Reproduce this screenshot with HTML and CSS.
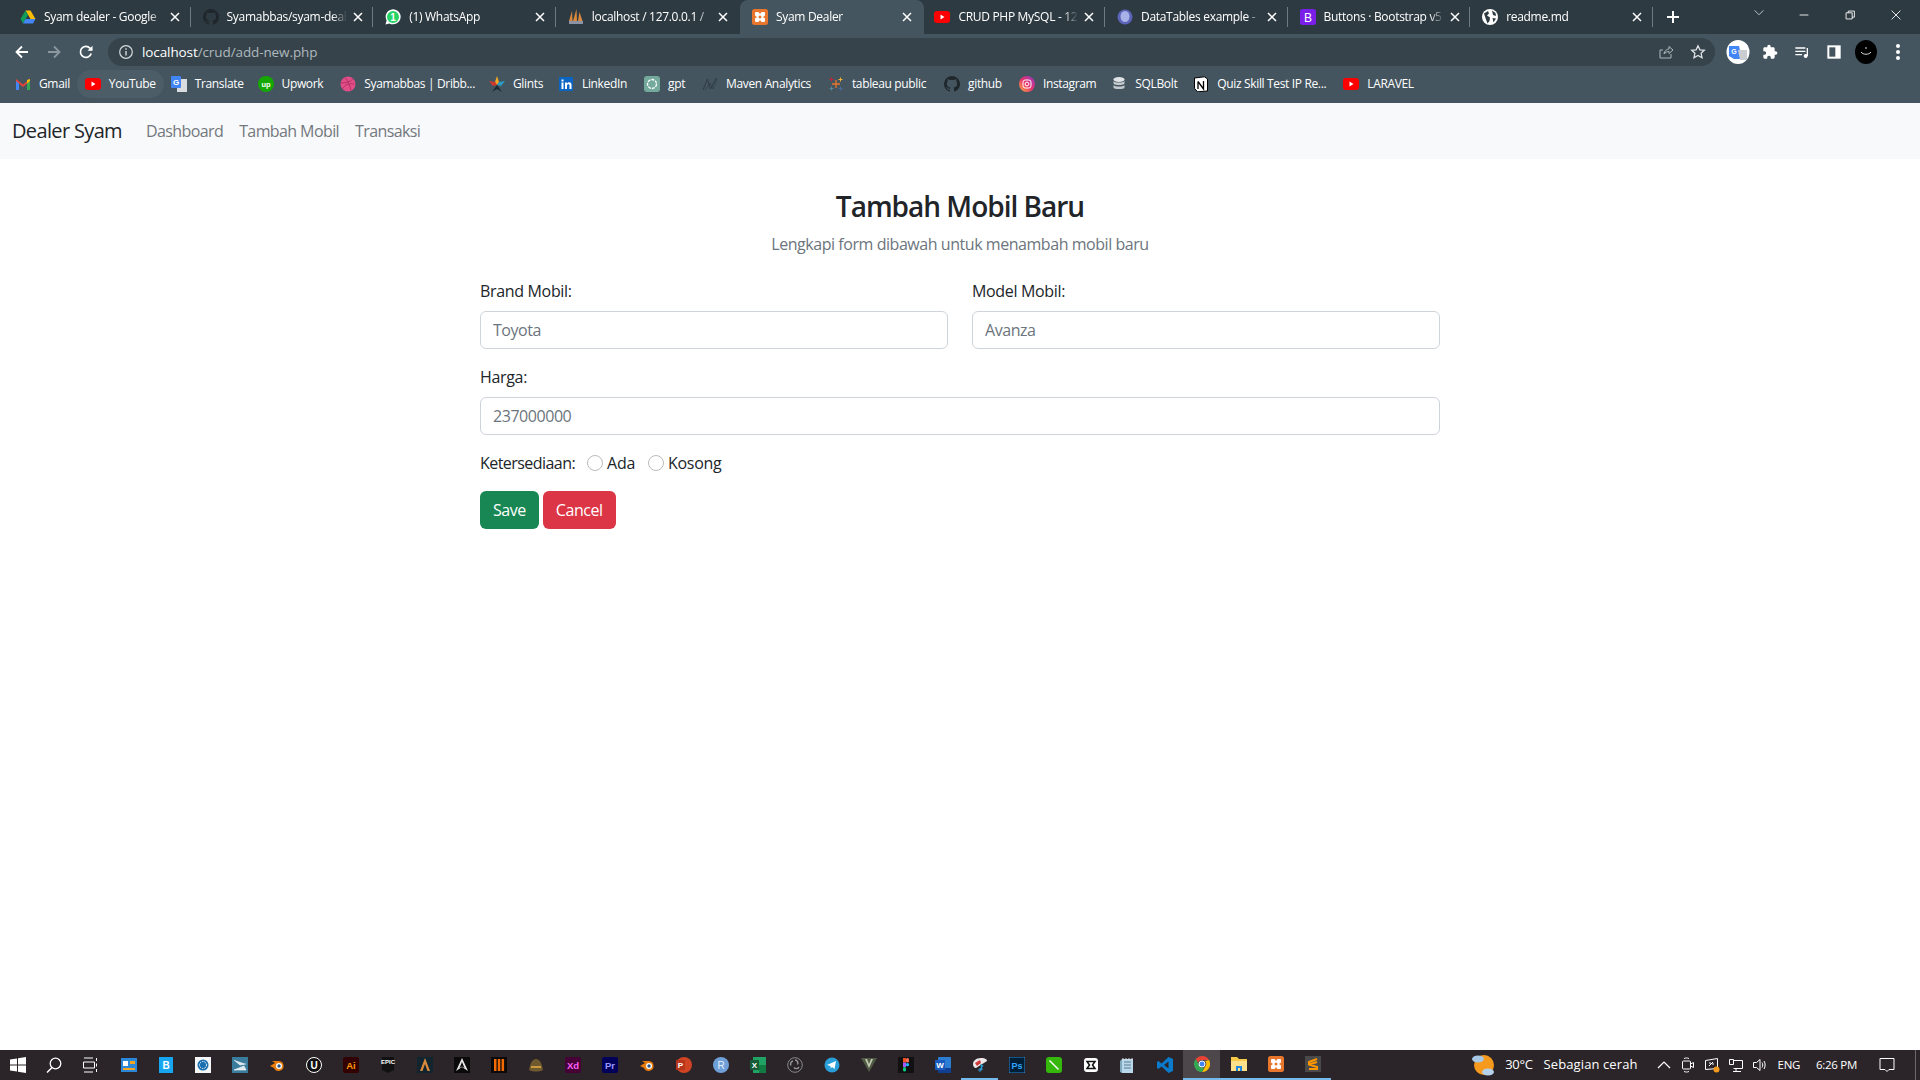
FILE: index.html
```html
<!DOCTYPE html>
<html lang="en">
<head>
    <meta charset="utf-8">
    <title>Syam Dealer</title>
    <link rel="stylesheet" href="styles.css">
</head>
<body>
    <svg class="defs" width="0" height="0">
        <symbol id="yt" viewBox="0 0 16 16"><rect x="0" y="2" width="16" height="12" rx="3" fill="#f00"/><path d="M6.5 5.5v5l4-2.5z" fill="#fff"/></symbol>
        <symbol id="gh" viewBox="0 0 16 16"><path d="M8 0a8 8 0 0 0-2.5 15.6c.4.1.5-.2.5-.4v-1.4c-2.2.5-2.7-1-2.7-1-.4-.9-.9-1.200-.9-1.200-.7-.5.1-.5.1-.5.8.1 1.200.8 1.200.8.7 1.200 1.900.9 2.300.7.1-.5.3-.9.5-1.100-1.800-.2-3.600-.9-3.600-4 0-.9.3-1.600.8-2.100-.1-.2-.4-1 .1-2.100 0 0 .7-.2 2.200.8a7.600 7.600 0 0 1 4 0c1.500-1 2.200-.8 2.200-.8.4 1.100.2 1.900.1 2.100.5.6.8 1.300.8 2.100 0 3.100-1.900 3.800-3.700 4 .3.300.6.800.6 1.500v2.200c0 .2.100.5.500.4A8 8 0 0 0 8 0z"/></symbol>
        <symbol id="xampp" viewBox="0 0 16 16"><rect width="16" height="16" rx="2.5" fill="#e8762d"/><path d="M4 3h2.500L8 5l1.500-2H12a1 1 0 0 1 1 1v2.500L11 8l2 1.500V12a1 1 0 0 1-1 1H9.500L8 11l-1.500 2H4a1 1 0 0 1-1-1V9.500L5 8 3 6.500V4a1 1 0 0 1 1-1z" fill="#fff"/><circle cx="8" cy="8" r="1.5" fill="#e8762d"/></symbol>
        <symbol id="close" viewBox="0 0 16 16"><path d="M4 4l8 8M12 4l-8 8" stroke="#fff" stroke-width="1.5" fill="none"/></symbol>
    </svg>

    <div class="browser">
        <div class="tabstrip">
            <div class="tab">
                <svg class="fav" viewBox="0 0 16 16"><path d="M5.500 1.500h5l5 8.500h-5z" fill="#fbbc04"/><path d="M5.500 1.500L.5 10l2.500 4.500L8 6z" fill="#0f9d58"/><path d="M3 14.500h10l2.500-4.500H5.500z" fill="#4285f4"/></svg>
                <span class="tab-title">Syam dealer - Google</span>
                <svg class="tab-x"><use href="#close"/></svg>
            </div>
            <i class="tab-sep"></i>
            <div class="tab">
                <svg class="fav dim-gh"><use href="#gh"/></svg>
                <span class="tab-title">Syamabbas/syam-deal</span>
                <svg class="tab-x"><use href="#close"/></svg>
            </div>
            <i class="tab-sep"></i>
            <div class="tab">
                <svg class="fav" viewBox="0 0 16 16"><path d="M.5 15.500l1.100-4A7.500 7.500 0 1 1 4.500 14.400z" fill="#fff"/><circle cx="8" cy="8" r="6" fill="#25d366"/><text x="8" y="11.500" class="fav-text" fill="#fff" font-size="10">1</text></svg>
                <span class="tab-title">(1) WhatsApp</span>
                <svg class="tab-x"><use href="#close"/></svg>
            </div>
            <i class="tab-sep"></i>
            <div class="tab">
                <svg class="fav" viewBox="0 0 16 16"><path d="M4 2L1 12h3.500zM8.500 0L5 12h4zM11.500 3L10 12h4.500z" fill="#d98a3c"/><rect x="1" y="12" width="14" height="3" fill="#8b93a5"/></svg>
                <span class="tab-title">localhost / 127.0.0.1 /</span>
                <svg class="tab-x"><use href="#close"/></svg>
            </div>
            <div class="tab tab-active">
                <svg class="fav"><use href="#xampp"/></svg>
                <span class="tab-title">Syam Dealer</span>
                <svg class="tab-x"><use href="#close"/></svg>
            </div>
            <div class="tab">
                <svg class="fav"><use href="#yt"/></svg>
                <span class="tab-title">CRUD PHP MySQL - 12</span>
                <svg class="tab-x"><use href="#close"/></svg>
            </div>
            <i class="tab-sep"></i>
            <div class="tab">
                <svg class="fav" viewBox="0 0 16 16"><circle cx="8" cy="8" r="7.5" fill="#5b64b8"/><ellipse cx="8" cy="7.5" rx="4.5" ry="5.5" fill="#a9b2e6"/></svg>
                <span class="tab-title">DataTables example -</span>
                <svg class="tab-x"><use href="#close"/></svg>
            </div>
            <i class="tab-sep"></i>
            <div class="tab">
                <svg class="fav" viewBox="0 0 16 16"><rect width="16" height="16" rx="2.5" fill="#7a1fe8"/><text x="8" y="12.500" class="fav-text fav-thin" fill="#fff" font-size="12">B</text></svg>
                <span class="tab-title">Buttons · Bootstrap v5</span>
                <svg class="tab-x"><use href="#close"/></svg>
            </div>
            <i class="tab-sep"></i>
            <div class="tab">
                <svg class="fav" viewBox="0 0 16 16"><circle cx="8" cy="8" r="8" fill="#fff"/><path d="M2 4.500l4-2.500 1 2.500-2 2 3 2-.5 3.500-2 2.500L3.500 9zM10 1.500l3.500 2.500.5 3-3-1zM10.500 9l3.500.5-2.500 4z" fill="#2e3a41"/></svg>
                <span class="tab-title">readme.md</span>
                <svg class="tab-x"><use href="#close"/></svg>
            </div>
            <i class="tab-sep"></i>
            <svg class="newtab" viewBox="0 0 16 16"><path d="M8 2v12M2 8h12" stroke="#fff" stroke-width="2"/></svg>
            <svg class="tab-list" viewBox="0 0 16 16"><path d="M3 5l5 5 5-5" stroke="#cfd6da" fill="none"/></svg>
            <div class="winbtns">
                <svg viewBox="0 0 16 16"><path d="M3 8h10" stroke="#fff"/></svg>
                <svg viewBox="0 0 16 16"><path d="M3.500 5.500h7v7h-7zM6 5.500V3.500h7v7h-2.500" stroke="#fff" fill="none"/></svg>
                <svg viewBox="0 0 16 16"><path d="M3 3l10 10M13 3L3 13" stroke="#fff" fill="none"/></svg>
            </div>
        </div>

        <div class="toolbar">
            <svg class="nav-ico" viewBox="0 0 16 16"><path d="M14 8H3M8 2.500L2.500 8 8 13.500" stroke="#fff" stroke-width="1.8" fill="none"/></svg>
            <svg class="nav-ico" viewBox="0 0 16 16"><path d="M2 8h11M8 2.500L13.500 8 8 13.500" stroke="#8b989f" stroke-width="1.8" fill="none"/></svg>
            <svg class="nav-ico" viewBox="0 0 16 16"><path d="M13.200 9.500A5.500 5.500 0 1 1 12 4.200L14 6" stroke="#fff" stroke-width="1.7" fill="none"/><path d="M14.500 1.800v5h-5z" fill="#fff"/></svg>
            <div class="omnibox">
                <svg class="info" viewBox="0 0 16 16"><circle cx="8" cy="8" r="6.3" stroke="#d5dbde" stroke-width="1.2" fill="none"/><path d="M8 7v4.500M8 4.300v1.400" stroke="#d5dbde" stroke-width="1.4"/></svg>
                <span class="url"><b>localhost</b>/crud/add-new.php</span>
                <svg class="omni-ico" viewBox="0 0 16 16"><path d="M13 10v4H2V6h3M6 10c0-3 3-5 5-5V2.500L15 6l-4 3.500V7.500c-2 0-4 1-5 2.500z" stroke="#aeb8bd" fill="none"/></svg>
                <svg class="omni-ico" viewBox="0 0 16 16"><path d="M8 1.800l1.900 4 4.400.5-3.200 3 .9 4.400L8 11.500l-4 2.200.9-4.400-3.200-3 4.400-.5z" stroke="#dfe4e7" stroke-width="1.3" fill="none"/></svg>
            </div>
            <div class="ext-row">
                <svg class="ext" viewBox="0 0 24 24"><ellipse cx="12" cy="12" rx="11.5" ry="12" fill="#fff"/><path d="M3 6h10l3 13H8l-5-3z" fill="#4285f4"/><path d="M12 10h9v10h-7z" fill="#c9ccd1"/><text x="8" y="14" class="fav-text" fill="#fff" font-size="7">G</text></svg>
                <svg class="ext" viewBox="0 0 24 24"><path d="M20.500 11H19V7c0-1.100-.9-2-2-2h-4V3.500C13 2.120 11.880 1 10.500 1S8 2.120 8 3.500V5H4c-1.100 0-2 .9-2 2v3.800h1.500c1.490 0 2.700 1.210 2.700 2.700s-1.210 2.700-2.700 2.700H2V20c0 1.100.9 2 2 2h3.800v-1.500c0-1.490 1.210-2.700 2.700-2.700s2.700 1.210 2.700 2.700V22H17c1.100 0 2-.9 2-2v-4h1.500c1.380 0 2.500-1.120 2.500-2.500S21.880 11 20.500 11z" fill="#fff"/></svg>
                <svg class="ext" viewBox="0 0 24 24"><path d="M2 6h15M2 11h15M2 16h10" stroke="#fff" stroke-width="2"/><path d="M20 6v12" stroke="#fff" stroke-width="2"/><circle cx="17.500" cy="18" r="3" fill="#fff"/></svg>
                <svg class="ext" viewBox="0 0 24 24"><path d="M2 2h20v20H2z" fill="#fff"/><rect x="5" y="5" width="9" height="14" fill="#44555f"/></svg>
                <svg class="ext" viewBox="0 0 24 24"><ellipse cx="12" cy="12" rx="11" ry="12" fill="#000"/><path d="M7 12c2 3 8 3 10 0" stroke="#ddd" fill="none"/><path d="M11 8h2" stroke="#ddd"/></svg>
                <svg class="ext" viewBox="0 0 24 24"><circle cx="12" cy="6" r="2" fill="#fff"/><circle cx="12" cy="12" r="2" fill="#fff"/><circle cx="12" cy="18" r="2" fill="#fff"/></svg>
            </div>
        </div>

        <div class="bookmarks">
            <div class="bm bm-gmail">
                <svg viewBox="0 0 16 16"><path d="M1 3l7 5.500L15 3v11h-3V7.500L8 11 4 7.500V14H1z" fill="#ea4335"/><path d="M1 5v9h3V7.500z" fill="#4285f4"/><path d="M15 5v9h-3V7.500z" fill="#34a853"/><path d="M12 4l3-1v2l-3 2.500z" fill="#fbbc04"/></svg>Gmail</div>
            <div class="bm bm-yt"><svg><use href="#yt"/></svg>YouTube</div>
            <div class="bm bm-translate">
                <svg viewBox="0 0 16 16"><rect x="6" y="3" width="10" height="13" fill="#d9dde0"/><rect y="0" width="10" height="12" rx="1" fill="#4285f4"/><text x="5" y="9" class="fav-text" fill="#fff" font-size="8">G</text></svg>Translate</div>
            <div class="bm bm-upwork">
                <svg viewBox="0 0 16 16"><circle cx="8" cy="8" r="8" fill="#14a800"/><text x="8" y="10.500" class="fav-text" fill="#fff" font-size="7.5">up</text></svg>Upwork</div>
            <div class="bm bm-dribbble">
                <svg viewBox="0 0 16 16"><circle cx="8" cy="8" r="7.5" fill="#e24d87"/><path d="M5 1.500c3 4 5 8 6 13M1 7c5 0 9-1 12-4M2.500 13c2-4 6-6 12-5" stroke="#a82c5c" stroke-width=".8" fill="none"/></svg>Syamabbas | Dribb...</div>
            <div class="bm bm-glints">
                <svg viewBox="0 0 16 16"><path d="M8 0l2 6-2 3-2-3z" fill="#f6a623"/><path d="M16 5l-6 1-2 3 4 1z" fill="#2a9dc4"/><path d="M0 5l6 1 2 3-4 1z" fill="#d0392e"/><path d="M8 9l5 7-5-3-5 3z" fill="#1d2a32"/></svg>Glints</div>
            <div class="bm bm-linkedin">
                <svg viewBox="0 0 16 16"><rect x="1" y="1" width="14" height="14" fill="#0a66c2"/><path d="M3.500 6.500h2V13h-2zM3.500 3.500h2v2h-2zM7 6.500h2v1c.5-.8 1.300-1.200 2.200-1.200 1.500 0 2.300 1 2.300 2.700v4h-2V9.500c0-.8-.3-1.300-1-1.300S9 8.700 9 9.500V13H7z" fill="#fff"/></svg>LinkedIn</div>
            <div class="bm bm-gpt">
                <svg viewBox="0 0 16 16"><rect width="16" height="16" rx="3" fill="#74aa9c"/><circle cx="8" cy="8" r="4.5" stroke="#fff" stroke-width="1.3" fill="none" stroke-dasharray="3 1"/></svg>gpt</div>
            <div class="bm bm-maven">
                <svg viewBox="0 0 16 16"><path d="M1 14L5.500 3l3 10L14.500 2" stroke="#2e3a41" fill="none"/><path d="M3 14l5-7 3 6 4-10" stroke="#2e3a41" stroke-width=".6" fill="none"/></svg>Maven Analytics</div>
            <div class="bm bm-tableau">
                <svg viewBox="0 0 16 16"><path d="M8 4v8M4 8h8" stroke="#e8762d" stroke-width="1.3"/><path d="M3.500 1.500v4M1.500 3.500h4" stroke="#c72037"/><path d="M12.500 1.500v4M10.500 3.500h4" stroke="#f2b134"/><path d="M3.500 10.500v4M1.500 12.500h4" stroke="#5b879b"/><path d="M12.500 10.500v4M10.500 12.500h4" stroke="#4e6a9e"/></svg>tableau public</div>
            <div class="bm bm-github"><svg><use href="#gh"/></svg>github</div>
            <div class="bm bm-ig">
                <svg viewBox="0 0 16 16"><defs><linearGradient id="ig" x1="0" y1="1" x2="1" y2="0"><stop offset="0" stop-color="#fbb03b"/><stop offset=".5" stop-color="#e8316f"/><stop offset="1" stop-color="#8a3ac8"/></linearGradient></defs><circle cx="8" cy="8" r="8" fill="url(#ig)"/><rect x="4" y="4" width="8" height="8" rx="2.2" stroke="#fff" fill="none"/><circle cx="8" cy="8" r="1.9" stroke="#fff" fill="none"/></svg>Instagram</div>
            <div class="bm bm-sql">
                <svg viewBox="0 0 16 16"><ellipse cx="8" cy="3.500" rx="5.500" ry="2.500" fill="#e0e4e6"/><path d="M2.500 5v2.500c1.500 2 9.500 2 11 0V5c-1.500 2-9.500 2-11 0zM2.500 9v2.500c0 2 11 2 11 0V9c-1.500 2-9.500 2-11 0z" fill="#c4cacd"/></svg>SQLBolt</div>
            <div class="bm bm-quiz">
                <svg viewBox="0 0 16 16"><path d="M1.500 2l10-1.200L14.500 3v12l-10 .8-3-3.500z" fill="#fff" stroke="#000"/><path d="M5 5.500v7.500M5 5.500l5.500 7.500V5" stroke="#000" stroke-width="1.3" fill="none"/></svg>Quiz Skill Test IP Re...</div>
            <div class="bm bm-laravel"><svg><use href="#yt"/></svg>LARAVEL</div>
        </div>
    </div>

    <nav class="navbar">
        <a class="brand">Dealer Syam</a>
        <a class="nav-link">Dashboard</a>
        <a class="nav-link">Tambah Mobil</a>
        <a class="nav-link">Transaksi</a>
    </nav>

    <main class="page">
        <h3 class="page-title">Tambah Mobil Baru</h3>
        <p class="page-sub">Lengkapi form dibawah untuk menambah mobil baru</p>

        <form class="form">
            <div class="row">
                <div class="col">
                    <label class="form-label">Brand Mobil:</label>
                    <input class="form-control" type="text" placeholder="Toyota">
                </div>
                <div class="col">
                    <label class="form-label">Model Mobil:</label>
                    <input class="form-control" type="text" placeholder="Avanza">
                </div>
            </div>
            <div class="field">
                <label class="form-label">Harga:</label>
                <input class="form-control" type="text" placeholder="237000000">
            </div>
            <div class="radios">
                <span class="radios-label">Ketersediaan:</span>
                <label class="radio"><i class="radio-dot"></i>Ada</label>
                <label class="radio"><i class="radio-dot"></i>Kosong</label>
            </div>
            <div class="actions">
                <button class="btn btn-save" type="button">Save</button>
                <button class="btn btn-cancel" type="button">Cancel</button>
            </div>
        </form>
    </main>

    <footer class="taskbar">
        <svg class="sys" viewBox="0 0 16 16"><path d="M0 2.500l7-1v6H0zM8 1.300L16 0v7.500H8zM0 8.500h7v6l-7-1zM8 8.500h8V16l-8-1.200z" fill="#fff"/></svg>
        <svg class="sys" viewBox="0 0 16 16"><circle cx="9.500" cy="6.500" r="5.300" stroke="#fff" stroke-width="1.3" fill="none"/><path d="M6 10.500L1 15.500" stroke="#fff" stroke-width="1.5"/></svg>
        <svg class="sys" viewBox="0 0 16 16"><path d="M2 1h9M2 15h9M1.500 5h11v6h-11zM14.500 1v3M14.500 6.500v3M14.500 12v3" stroke="#fff" fill="none"/></svg>

        <div class="apps">
            <div class="app"><svg viewBox="0 0 16 16"><rect y="1" width="16" height="14" fill="#2b88d8"/><rect x="2" y="4" width="5" height="5" fill="#fff"/><rect x="9" y="4" width="5" height="3" fill="#f6a623"/><rect x="2" y="11" width="12" height="2" fill="#f6a623"/></svg></div>
            <div class="app"><svg viewBox="0 0 16 16"><rect x="1" width="14" height="16" fill="#16a6f0"/><text x="8" y="12" class="fav-text" fill="#fff" font-size="10">B</text></svg></div>
            <div class="app"><svg viewBox="0 0 16 16"><rect width="16" height="16" fill="#f4f6f8"/><circle cx="8" cy="8" r="5.500" fill="#1a6fb0"/><circle cx="8" cy="8" r="3.500" stroke="#fff" fill="none" stroke-dasharray="1.5 1"/></svg></div>
            <div class="app"><svg viewBox="0 0 16 16"><rect width="16" height="16" fill="#3a7c9c"/><path d="M2 3l6 5 6-1M2 13l10-4 2 4z" stroke="#fff" fill="#dfe8ec" stroke-width=".6"/></svg></div>
            <div class="app"><svg viewBox="0 0 16 16"><path d="M1 9l5-3-3-2h7a5 5 0 1 1-5 7z" fill="#e87d0d"/><circle cx="10" cy="9" r="3" fill="#fff"/><circle cx="10" cy="9" r="1.7" fill="#265787"/></svg></div>
            <div class="app"><svg viewBox="0 0 16 16"><circle cx="8" cy="8" r="7.500" stroke="#fff" fill="#111"/><text x="8" y="12" class="fav-text" fill="#fff" font-size="10">U</text></svg></div>
            <div class="app"><svg viewBox="0 0 16 16"><rect width="16" height="16" rx="2" fill="#330000"/><text x="8" y="12" class="fav-text" fill="#ff9a00" font-size="9.5">Ai</text></svg></div>
            <div class="app"><svg viewBox="0 0 16 16"><path d="M2 0h12v13l-6 3-6-3z" fill="#111"/><text x="8" y="7" class="fav-text" fill="#fff" font-size="6">EPIC</text></svg></div>
            <div class="app"><svg viewBox="0 0 16 16"><rect width="16" height="16" fill="#12242e"/><path d="M8 1L3 14h2.500L8 7l2.500 7H13z" fill="#d98a3c"/></svg></div>
            <div class="app"><svg viewBox="0 0 16 16"><rect width="16" height="16" fill="#0a0a0a"/><path d="M8 1L2 14l6-4 6 4zM8 5l-2.500 6L8 9.500l2.500 1.500z" fill="#e8e8e8" fill-rule="evenodd"/></svg></div>
            <div class="app"><svg viewBox="0 0 16 16"><rect width="16" height="16" fill="#0a0a0a"/><path d="M3 2h2.500v12H3zM6.800 2h2.500v12H6.800zM10.600 2h2.500v12h-2.500z" fill="#f26a00"/></svg></div>
            <div class="app"><svg viewBox="0 0 16 16"><path d="M1 13c1-6 3-11 7-11s6 5 7 11c-4 2-10 2-14 0z" fill="#6e5a2e"/><path d="M3 9h10v2H3z" fill="#c99a3e"/></svg></div>
            <div class="app"><svg viewBox="0 0 16 16"><rect width="16" height="16" rx="2" fill="#470137"/><text x="8" y="12" class="fav-text" fill="#ff61f6" font-size="9.5">Xd</text></svg></div>
            <div class="app"><svg viewBox="0 0 16 16"><rect width="16" height="16" rx="2" fill="#00005b"/><text x="8" y="12" class="fav-text" fill="#9999ff" font-size="9.5">Pr</text></svg></div>
            <div class="app"><svg viewBox="0 0 16 16"><path d="M1 9l5-3-3-2h7a5 5 0 1 1-5 7z" fill="#e87d0d"/><circle cx="10" cy="9" r="3" fill="#fff"/><circle cx="10" cy="9" r="1.7" fill="#265787"/></svg></div>
            <div class="app"><svg viewBox="0 0 16 16"><circle cx="8" cy="8" r="8" fill="#d04423"/><rect y="3" width="9" height="10" rx="1" fill="#b7361b"/><text x="4.500" y="11" class="fav-text" fill="#fff" font-size="8">P</text></svg></div>
            <div class="app"><svg viewBox="0 0 16 16"><circle cx="8" cy="8" r="8" fill="#6f9fd8"/><text x="8" y="12" class="fav-text fav-thin" fill="#e8f0f8" font-size="10">R</text></svg></div>
            <div class="app"><svg viewBox="0 0 16 16"><rect x="3" width="13" height="16" fill="#21a366"/><rect x="9" y="8" width="7" height="8" fill="#107c41"/><rect y="3" width="9" height="10" fill="#185c37"/><text x="4.500" y="11" class="fav-text" fill="#fff" font-size="8">X</text></svg></div>
            <div class="app"><svg viewBox="0 0 16 16"><circle cx="8" cy="8" r="7.300" stroke="#8a8a8a" fill="#2a2528"/><path d="M8 3a3 3 0 0 1 2.500 4.500M12 10a3 3 0 0 1-5 .5M4 8.500A3 3 0 0 1 6 4" stroke="#9a9a9a" stroke-width="1.4" fill="none"/></svg></div>
            <div class="app"><svg viewBox="0 0 16 16"><circle cx="8" cy="8" r="7.500" fill="#2a9ed8"/><path d="M3 8l9-4-1.500 8-2.500-2-1.200 1.500-.5-2.500z" fill="#fff"/></svg></div>
            <div class="app"><svg viewBox="0 0 16 16"><path d="M0 1h16L8 15z" fill="#4f5a45"/><path d="M4 2l4 9 4-9-2 0-2 5-2-5z" fill="#c5c9b0"/></svg></div>
            <div class="app"><svg viewBox="0 0 16 16"><rect width="16" height="16" fill="#111"/><rect x="5" y="1" width="3" height="4.500" fill="#f24e1e"/><rect x="8" y="1" width="3" height="4.500" rx="1.5" fill="#ff7262"/><rect x="5" y="5.500" width="3" height="4.500" fill="#a259ff"/><circle cx="9.500" cy="7.700" r="1.6" fill="#1abcfe"/><rect x="5" y="10" width="3" height="4.500" rx="1.5" fill="#0acf83"/></svg></div>
            <div class="app"><svg viewBox="0 0 16 16"><rect x="3" width="13" height="16" rx="1" fill="#2b7cd3"/><rect x="3" y="11" width="13" height="5" fill="#103f91"/><rect y="3" width="10" height="10" fill="#185abd"/><text x="5" y="11" class="fav-text" fill="#fff" font-size="8">W</text></svg></div>
            <div class="app app-open"><svg viewBox="0 0 16 16"><path d="M1 8c0-3 3-6 8-6s6 2 6 3L4 12c-2 0-3-2-3-4z" fill="#f0e8e8"/><path d="M3 7l5-3 1 3-4 3z" fill="#d03a3a"/><path d="M9 8l1 6M11 9l-3 5" stroke="#2a9ed8" stroke-width="1.2"/><circle cx="8" cy="14" r="1.2" stroke="#2a9ed8" fill="none"/></svg></div>
            <div class="app"><svg viewBox="0 0 16 16"><rect width="16" height="16" rx="1.5" fill="#001e36" stroke="#31a8ff" stroke-width=".8"/><text x="8" y="12" class="fav-text" fill="#31a8ff" font-size="9">Ps</text></svg></div>
            <div class="app"><svg viewBox="0 0 16 16"><rect width="16" height="16" rx="3" fill="#35b80b"/><path d="M4 3l9 9-1 1-9-9z" fill="#fff"/></svg></div>
            <div class="app"><svg viewBox="0 0 16 16"><rect x="1" y="1" width="14" height="14" rx="3" fill="#fff"/><path d="M4 4.500h8L9.500 8 12 11.500H4L6.500 8z" fill="none" stroke="#111" stroke-width="1.5"/></svg></div>
            <div class="app"><svg viewBox="0 0 16 16"><path d="M2 2h11v14H2z" fill="#b9d7ea"/><path d="M0 4l2-2v14l-2-1z" fill="#7fa8bd"/><path d="M4 5h7M4 8h7M4 11h7" stroke="#5b7d90"/><path d="M3 1v2M6 1v2M9 1v2M12 1v2" stroke="#ddd"/></svg></div>
            <div class="app"><svg viewBox="0 0 16 16"><path d="M11.500 0L16 2v12l-4.500 2L4.500 9.500 1.500 12 0 11V5l1.500-1 3 2.500zM11.500 4.500L7 8l4.500 3.500z" fill="#0a7acb" fill-rule="evenodd"/></svg></div>
            <div class="app app-active">
                <svg viewBox="0 0 16 16"><path d="M8 0a8 8 0 0 1 7 4H8a4 4 0 0 0-4 3L1.800 3A8 8 0 0 1 8 0z" fill="#ea4335"/><path d="M15 4a8 8 0 0 1-7 12l3.500-6A4 4 0 0 0 11 5z" fill="#fbbc04"/><path d="M1.800 3L5 9a4 4 0 0 0 5 2.500L8 16A8 8 0 0 1 1.800 3z" fill="#34a853"/><circle cx="8" cy="8" r="3" fill="#4285f4" stroke="#fff"/></svg>
            </div>
            <div class="app app-open"><svg viewBox="0 0 16 16"><path d="M0 1h6l2 2h8v12H0z" fill="#f7c948"/><path d="M0 5h16v10H0z" fill="#ffe08a"/><path d="M5 15v-5h6v5H9v-3H7v3z" fill="#1e88e5"/></svg></div>
            <div class="app app-open"><svg><use href="#xampp"/></svg></div>
            <div class="app app-open"><svg viewBox="0 0 16 16"><rect width="16" height="16" fill="#4a4a4a"/><path d="M12 3L4 6v2.500l8 2.500v2l-8 0M4 8.500L12 6" stroke="#ff9800" stroke-width="2" fill="none"/></svg></div>
        </div>

        <div class="tray">
            <svg class="weather" viewBox="0 0 24 24"><circle cx="13" cy="12" r="10" fill="#f59a1c"/><ellipse cx="7" cy="6" rx="6" ry="3.5" fill="#a8c8e8"/><ellipse cx="17" cy="19" rx="6" ry="3.5" fill="#b6d1ec"/></svg>
            <span class="temp">30°C</span>
            <span class="cond">Sebagian cerah</span>
            <svg class="tray-ico caret" viewBox="0 0 16 16"><path d="M2 11l6-6 6 6" stroke="#fff" stroke-width="1.2" fill="none"/></svg>
            <svg class="tray-ico" viewBox="0 0 16 16"><rect x="2.500" y="4" width="8" height="8" rx="1" stroke="#fff" fill="none"/><path d="M10.500 7l3-1.500v5l-3-1.500M4 1.500c2-.7 3-.7 5 0M4 14.500c2 .7 3 .7 5 0" stroke="#fff" fill="none"/></svg>
            <svg class="tray-ico" viewBox="0 0 16 16"><path d="M1.500 3.500l12-2v10l-12 1z" stroke="#fff" fill="none"/><path d="M5 9l4-4M5 6h2M9 8v-2" stroke="#fff"/><circle cx="12.500" cy="12.500" r="3" fill="#f59a1c"/></svg>
            <svg class="tray-ico" viewBox="0 0 16 16"><path d="M1.500 2.500h4v5h-4zM5.500 3.500h9v8h-9M8 11.500v3M5 14.500h8" stroke="#fff" fill="none"/></svg>
            <svg class="tray-ico" viewBox="0 0 16 16"><path d="M1.500 5.500h3L8 2.500v11l-3.500-3h-3zM10 5.500c1 1.500 1 3.500 0 5M12 4c1.500 2.500 1.500 5.500 0 8" stroke="#fff" fill="none"/></svg>
            <span class="lang">ENG</span>
            <span class="clock">6:26 PM</span>
            <svg class="notif" viewBox="0 0 16 16"><path d="M1 1.500h14v11H10L8 14.500 6 12.500H1z" stroke="#fff" fill="none"/></svg>
            <i class="show-desktop"></i>
        </div>
    </footer>
</body>
</html>
```

FILE: styles.css
```css
* { box-sizing: border-box; }
html, body {
    margin: 0;
    padding: 0;
    height: 100%;
}
body {
    display: flex;
    flex-direction: column;
    height: 1080px;
    overflow: hidden;
    background: #fff;
    color: #212529;
    font: 16px/1.5 "Open Sans", "Noto Sans", sans-serif;
    letter-spacing: -0.45px;
}
.defs { position: absolute; }
.fav-text {
    font-family: "Liberation Sans", sans-serif;
    font-weight: 700;
    text-anchor: middle;
    letter-spacing: 0;
}
.fav-thin { font-weight: 400; }

/* browser chrome */
.browser { flex: none; color: #fff; font-size: 12px; letter-spacing: -0.3px; }
.tabstrip {
    display: flex;
    align-items: center;
    height: 34px;
    padding-left: 8px;
    background: #2e3a41;
}
.tab {
    display: flex;
    align-items: center;
    flex: none;
    width: 181.6px;
    height: 34px;
    padding-left: 12px;
    line-height: 34px;
}
.tab-active {
    width: 184px;
    margin: 0 -1.6px 0 2.6px;
    background: #44555f;
    border-radius: 8px 8px 0 0;
}
.tab-sep {
    flex: none;
    width: 1px;
    height: 20px;
    background: #6d7b83;
}
.fav { flex: none; width: 16px; height: 16px; margin-right: 8px; fill: #fff; }
.dim-gh { fill: #1f272c; }
.tab-title {
    flex: none;
    width: 120px;
    overflow: hidden;
    white-space: nowrap;
    -webkit-mask-image: linear-gradient(to right, #000 88%, transparent);
    mask-image: linear-gradient(to right, #000 88%, transparent);
}
.tab-x { flex: none; width: 16px; height: 16px; margin-left: 3px; }
.newtab { flex: none; width: 16px; height: 16px; margin-left: 12px; }
.tab-list { flex: none; width: 14px; height: 14px; margin: -8px 0 0 71px; }
.winbtns { display: flex; margin-left: auto; align-self: flex-start; }
.winbtns svg { width: 14px; height: 14px; margin: 8px 16px 0 16px; }
.winbtns svg:last-child { margin-right: 17px; }

.toolbar {
    display: flex;
    align-items: center;
    height: 35px;
    padding: 1px 0 0 6px;
    background: #44555f;
}
.nav-ico { flex: none; width: 16px; height: 16px; margin: 0 8px; }
.omnibox {
    display: flex;
    align-items: center;
    flex: none;
    width: 1607px;
    height: 28px;
    margin-left: 6px;
    padding: 0 9px 0 10px;
    background: #36434b;
    border-radius: 14px;
    font-size: 13.5px;
}
.info { flex: none; width: 16px; height: 16px; margin-right: 8px; }
.url { flex: 1; color: #aeb8bd; letter-spacing: -0.1px; }
.url b { color: #fff; font-weight: 400; }
.omni-ico { flex: none; width: 16px; height: 16px; margin-left: 16px; }
.ext-row { display: flex; align-items: center; margin-left: 11px; }
.ext { flex: none; width: 24px; height: 24px; margin-right: 8px; }
.ext:nth-child(2), .ext:nth-child(3), .ext:nth-child(4) { width: 16px; height: 16px; margin: 0 12px 0 4px; }
.ext:last-child { margin-right: 0; }

.bookmarks {
    display: flex;
    align-items: center;
    height: 34px;
    padding: 0 0 4px 7px;
    background: #44555f;
    font-size: 12px;
    letter-spacing: -0.35px;
}
.bm {
    display: flex;
    align-items: center;
    flex: none;
    height: 28px;
    padding: 0 8px;
    border-radius: 14px;
    white-space: nowrap;
}
.bm svg { flex: none; width: 16px; height: 16px; margin-right: 8px; fill: #1f272c; }
.bm-yt { margin-left: -1px; background: #4c5d67; }
.bm-yt svg, .bm-laravel svg { fill: none; }
.bm-translate { margin-left: -1px; }
.bm-upwork { margin-left: -2px; }
.bm-dribbble { margin-left: 1px; }
.bm-glints { margin-left: -2px; }
.bm-linkedin { margin-left: -1px; }
.bm-gpt { margin-left: 1px; }
.bm-maven { margin-left: 1px; }
.bm-tableau { margin-left: 1px; }
.bm-github { margin-left: 2px; }
.bm-ig { margin-left: 1px; }
.bm-sql { margin-left: -1px; }
.bm-laravel { margin-left: 1px; }

/* navbar */
.navbar {
    display: flex;
    align-items: center;
    flex: none;
    height: 56px;
    padding: 0 12px;
    background: #f8f9fa;
}
.brand { margin-right: 16px; font-size: 20px; color: #212529; letter-spacing: -0.65px; }
.nav-link { padding: 0 8px; color: #73787e; letter-spacing: -0.6px; }

/* form */
.page {
    flex: 1;
    width: 960px;
    margin: 0 auto;
    padding-top: 31px;
}
.page-title {
    margin: 0 0 8px;
    font-size: 28px;
    font-weight: 600;
    line-height: 33.6px;
    letter-spacing: -1px;
    text-align: center;
}
.page-sub {
    margin: 0 0 23px;
    color: #6c757d;
    text-align: center;
}
.row { display: flex; gap: 24px; }
.col { flex: 1; }
.field { margin-top: 16px; }
.form-label { display: block; margin-bottom: 8px; letter-spacing: -0.33px; }
.form-control {
    display: block;
    width: 100%;
    height: 38px;
    padding: 6px 12px;
    border: 1px solid #ced4da;
    border-radius: 6px;
    font: inherit;
    letter-spacing: inherit;
    color: #212529;
}
.form-control::placeholder { color: #6c757d; opacity: 1; }
.radios { display: flex; align-items: center; margin-top: 16px; }
.radios-label { margin-right: 12px; letter-spacing: -0.55px; }
.radio { display: flex; align-items: center; margin-right: 13px; letter-spacing: -0.3px; }
.radio-dot {
    width: 16px;
    height: 16px;
    margin-right: 4px;
    border: 1px solid #bbb;
    border-radius: 50%;
}
.actions { display: flex; gap: 4px; margin-top: 16px; }
.btn {
    height: 38px;
    padding: 0 13px;
    border: 0;
    border-radius: 6px;
    color: #fff;
    font: inherit;
    letter-spacing: inherit;
}
.btn-save { background: #198754; }
.btn-cancel { background: #dc3545; }

/* taskbar */
.taskbar {
    display: flex;
    align-items: center;
    flex: none;
    height: 30px;
    background: #2b2529;
    color: #fff;
    font-size: 12px;
    letter-spacing: -0.3px;
}
.sys { flex: none; width: 16px; height: 16px; margin-left: 10px; margin-right: 10px; }
.apps { display: flex; align-self: stretch; margin-left: 2px; }
.app {
    display: flex;
    align-items: center;
    justify-content: center;
    flex: none;
    width: 37px;
    height: 30px;
}
.app svg { width: 16px; height: 16px; }
.app-open { border-bottom: 2px solid #76b9ed; }
.app-active { background: #4d474b; border-bottom: 2px solid #76b9ed; }
.tray { display: flex; align-items: center; margin-left: auto; }
.weather { flex: none; width: 24px; height: 24px; margin-right: 10px; }
.temp { margin-right: 11px; font-size: 13px; }
.cond { margin-right: 18px; font-size: 13px; letter-spacing: 0.1px; }
.tray-ico { flex: none; width: 16px; height: 16px; margin-right: 8px; }
.lang { margin: 0 16px 0 2px; font-size: 11.5px; }
.clock { margin-right: 22px; font-size: 11.5px; }
.notif { flex: none; width: 16px; height: 16px; margin-right: 20px; }
.show-desktop { width: 1px; height: 30px; background: #6e686c; margin-right: 4px; }
```
